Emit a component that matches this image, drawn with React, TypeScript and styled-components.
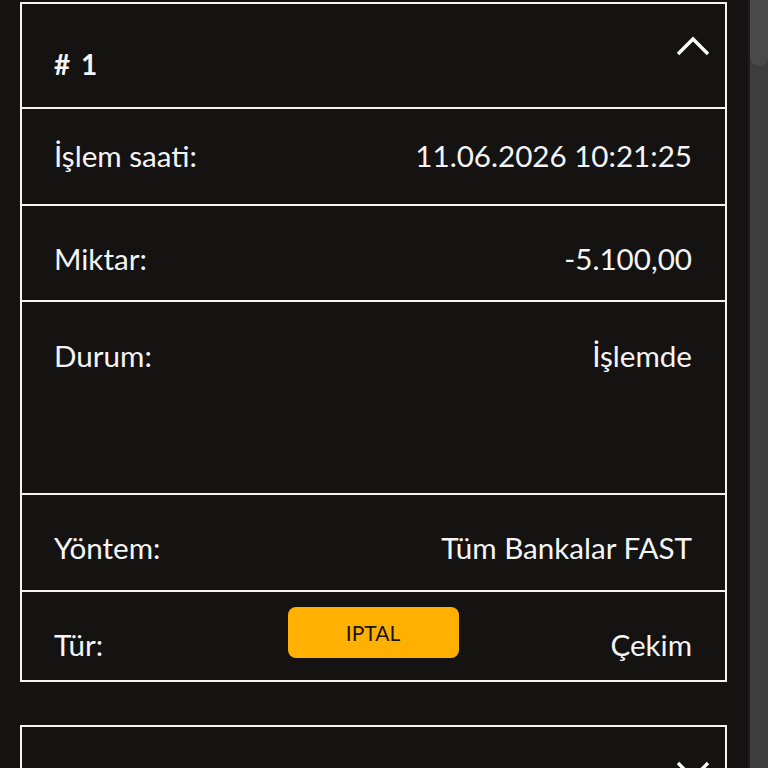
import React from 'react';
import styled, { createGlobalStyle } from 'styled-components';

const GlobalStyle = createGlobalStyle`
  html, body {
    margin: 0;
    padding: 0;
    background: #151212;
    font-family: Lato, 'Open Sans', sans-serif;
    overflow: hidden;
  }
`;

const Page = styled.div`
  display: flex;
  height: 768px;
  width: 768px;
  overflow: hidden;
  background: #151212;
`;

const Content = styled.div`
  width: 748px;
  padding: 2px 21px 0 20px;
  box-sizing: border-box;
  display: flex;
  flex-direction: column;
  gap: 43px;
`;

const ScrollTrack = styled.div`
  flex: 1;
  display: flex;
  flex-direction: column;
  background: #3e3d3d;
  border-left: 2px solid #1d1b1b;
`;

const ScrollThumb = styled.div`
  height: 66px;
  background: #4a4949;
  border-radius: 0 0 10px 10px;
`;

const Card = styled.div`
  border: 2px solid #f4f4f4;
  display: flex;
  flex-direction: column;
  flex-shrink: 0;
  color: #f5f5f5;
`;

const Header = styled.div`
  height: 103px;
  display: flex;
  justify-content: space-between;
  padding: 0 14px 0 32px;
  box-sizing: border-box;
`;

const Title = styled.div`
  font-weight: 700;
  font-size: 28px;
  line-height: 34px;
  padding-top: 43px;
  word-spacing: 4px;
`;

const Toggle = styled.div`
  padding-top: 31px;
`;

const Row = styled.div<{ $h: number; $top: number }>`
  height: ${(p) => p.$h}px;
  box-sizing: border-box;
  border-top: 2px solid #f4f4f4;
  padding: ${(p) => p.$top}px 33px 0 32px;
  display: grid;
  grid-template-columns: 1fr auto 1fr;
  align-items: start;
  font-size: 29.6px;
  line-height: 36px;
`;

const Label = styled.div`
  grid-column: 1;
  white-space: nowrap;
`;

const Value = styled.div`
  grid-column: 3;
  justify-self: end;
  white-space: nowrap;
`;

const CancelButton = styled.button`
  grid-column: 2;
  width: 171px;
  height: 51px;
  margin-top: -20px;
  border: none;
  border-radius: 8px;
  background: #ffb000;
  color: #1a1410;
  font-family: Lato, sans-serif;
  font-size: 21px;
  padding-bottom: 2px;
`;

const Chevron = ({ up }: { up: boolean }) => (
  <svg width="36" height="24" viewBox="0 0 36 24">
    <path
      d={up ? 'M3 19 L18 4 L33 19' : 'M3 5 L18 20 L33 5'}
      fill="none"
      stroke="#fff"
      strokeWidth="3.4"
    />
  </svg>
);

const rows = [
  { label: 'İşlem saati:', value: '11.06.2026 10:21:25', h: 97, top: 29 },
  { label: 'Miktar:', value: '-5.100,00', h: 96, top: 35 },
  { label: 'Durum:', value: 'İşlemde', h: 193, top: 36 },
  { label: 'Yöntem:', value: 'Tüm Bankalar FAST', h: 97, top: 35 },
];

export default function App() {
  return (
    <Page>
      <GlobalStyle />
      <Content>
        <Card>
          <Header>
            <Title># 1</Title>
            <Toggle>
              <Chevron up />
            </Toggle>
          </Header>
          {rows.map((r) => (
            <Row key={r.label} $h={r.h} $top={r.top}>
              <Label>{r.label}</Label>
              <Value>{r.value}</Value>
            </Row>
          ))}
          <Row $h={90} $top={35}>
            <Label>Tür:</Label>
            <CancelButton>IPTAL</CancelButton>
            <Value>Çekim</Value>
          </Row>
        </Card>
        <Card>
          <Header>
            <Title># 2</Title>
            <Toggle>
              <Chevron up={false} />
            </Toggle>
          </Header>
        </Card>
      </Content>
      <ScrollTrack>
        <ScrollThumb />
      </ScrollTrack>
    </Page>
  );
}
